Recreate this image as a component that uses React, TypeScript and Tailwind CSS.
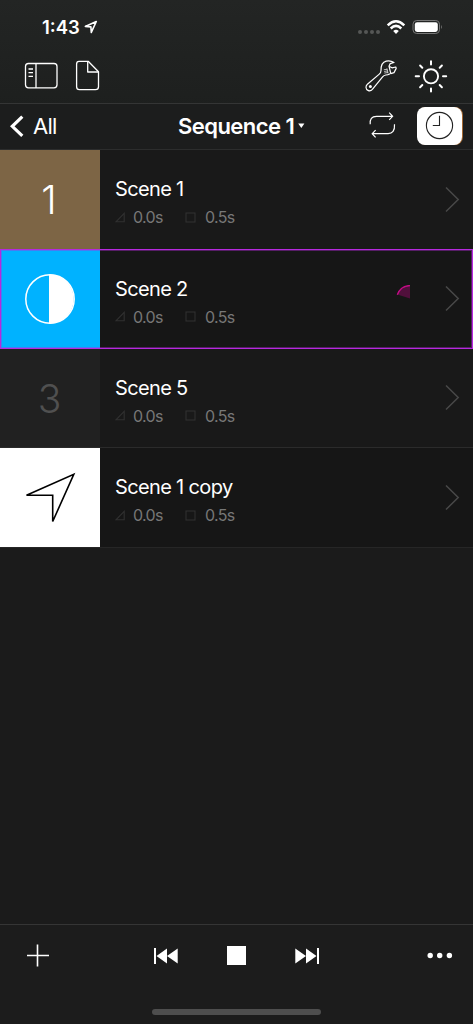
import type { ReactNode } from "react"

type Scene = {
    name: string
    thumb: ReactNode
    thumbClass: string
    rowClass: string
    active?: boolean
}

const HalfCircle = () => (
    <svg width="52" height="52" viewBox="24 273 52 52" fill="none">
        <circle cx="50" cy="299" r="24.2" stroke="white" strokeWidth="1.5" />
        <path d="M49 274.3A24.7 24.7 0 0 1 49 323.7Z" fill="white" />
    </svg>
)

const Arrow = () => (
    <svg width="52" height="52" viewBox="24 471.5 52 52" fill="none" stroke="black" strokeWidth="1.6">
        <path d="M26.5 494.8L73.8 473.8L52.7 521V494.8Z" />
    </svg>
)

const scenes: Scene[] = [
    {
        name: "Scene 1",
        thumb: <span className="pr-[2px] text-[39px] font-light text-white">1</span>,
        thumbClass: "bg-[#7d6545]",
        rowClass: "h-[99px] bg-[#191919]",
    },
    {
        name: "Scene 2",
        thumb: <HalfCircle />,
        thumbClass: "bg-[#00b2ff]",
        rowClass: "h-[100px] bg-[#161616]",
        active: true,
    },
    {
        name: "Scene 5",
        thumb: <span className="pr-[1px] text-[39px] font-light text-[#505050]">3</span>,
        thumbClass: "bg-[#212121]",
        rowClass: "h-[99px] bg-[#191919] border-b border-[#2b2b2b]",
    },
    {
        name: "Scene 1 copy",
        thumb: <Arrow />,
        thumbClass: "bg-white",
        rowClass: "h-[100px] bg-[#161616] border-b border-[#262626]",
    },
]

function StatusBar() {
    return (
        <div className="flex h-[54px] items-center justify-between pl-[42px] pr-[31px]">
            <div className="flex items-center gap-[4px]">
                <span className="w-[38px] whitespace-nowrap text-[18.5px] font-semibold leading-none">1:43</span>
                <svg width="14" height="14" viewBox="84 20 14 14" fill="none" stroke="white" strokeWidth="1.6" strokeLinejoin="round">
                    <path d="M85.3 26.4L96.3 21.5L91.3 32.4L90.9 26.9Z" />
                </svg>
            </div>
            <svg width="86" height="20" viewBox="356 17 86 20" fill="none">
                <g fill="#555756">
                    <circle cx="360" cy="32" r="2" />
                    <circle cx="366" cy="32" r="2" />
                    <circle cx="372" cy="32" r="2" />
                    <circle cx="378" cy="32" r="2" />
                </g>
                <g stroke="white" strokeWidth="2.5">
                    <path d="M387.7 25.3Q396 17.3 404.3 25.3" />
                    <path d="M390.7 28.5Q396 23.3 401.3 28.5" />
                </g>
                <path d="M393.2 31Q396 28.6 398.8 31L396 34Z" fill="white" />
                <rect x="413" y="20.5" width="26.5" height="13" rx="3.7" stroke="#777" />
                <rect x="414.8" y="22.2" width="23" height="9.7" rx="2.3" fill="white" />
                <path d="M441 25Q442.7 27 441 29Z" fill="#777" />
            </svg>
        </div>
    )
}

function Toolbar() {
    return (
        <div className="flex h-[50px] items-center justify-between border-b border-[#343535] pb-[5px] pl-6 pr-[25px]">
            <div className="flex items-center gap-[16px]">
                {/* Sidebar */}
                <svg width="35" height="32" viewBox="24 60 35 32" fill="none" stroke="white" strokeWidth="1.3">
                    <rect x="25.5" y="63.5" width="31.5" height="24.3" rx="3" />
                    <path d="M36 63.5V88M28.5 69H33M28.5 72.7H33M28.5 76.3H33" />
                </svg>
                {/* Document */}
                <svg width="25" height="32" viewBox="75 60 25 32" fill="none" stroke="white" strokeWidth="1.3" strokeLinejoin="round">
                    <path d="M79 61.3H88.2L98.5 71.8V86.8Q98.5 89.7 95.5 89.7H79.5Q76.6 89.7 76.6 86.8V64Q76.6 61.3 79 61.3Z" />
                    <path d="M87.7 61.5V72H98.3" />
                </svg>
            </div>
            <div className="flex items-center gap-4">
                {/* Wrench */}
                <svg width="34" height="34" viewBox="364 59 34 34" fill="none" stroke="white" strokeWidth="1.2" strokeLinecap="round" strokeLinejoin="round">
                    <path d="M389.6 73.9Q388 74.8 385.8 75Q383.8 75.4 382.6 76.9L373 88.7C371.6 90.8 369.6 91.2 368 90.4C365.5 89.2 365.4 86 367.4 84.3L379 74.4Q381 72.8 381 70.4C380.9 66.2 382.2 62.3 386.2 61.2C389 60.4 391.6 61 394 62.5L390.2 63.6L389 66.2L390.8 73.6L394 72.6L396.2 68.4L395.8 67L392 67.8L390 66.8" />
                    <path d="M384.2 69.7L386.8 69.3M384.5 71.4L387.2 71M384.7 73L387.5 72.6M387 68.8L388 73" strokeWidth="0.7" />
                    <circle cx="370.4" cy="86.4" r="1.5" fill="white" stroke="none" />
                </svg>
                {/* Brightness */}
                <svg width="34" height="34" viewBox="414 59 34 34" fill="none" stroke="white" strokeWidth="2" strokeLinecap="round">
                    <circle cx="431" cy="76.3" r="7.1" strokeWidth="1.9" />
                    <path d="M431 61.3V64.4M431 88.4V91.4M415.7 76.3H419M443 76.3H446.2M420.1 65.5L422.3 67.7M439.7 85L441.9 87.2M441.9 65.5L439.7 67.7M422.3 85L420.1 87.2" />
                </svg>
            </div>
        </div>
    )
}

function NavBar() {
    return (
        <div className="grid h-[46px] grid-cols-[178px_1fr_105px] items-center border-b border-[#2c2d2d] bg-[#1c1d1d] pb-[2px]">
            <button className="flex items-center gap-[9px] pl-[10px]">
                <svg width="14" height="22" viewBox="10 115 14 22" fill="none" stroke="white" strokeWidth="3.2">
                    <path d="M22.3 116.7L12.3 126.3L22.3 135.8" />
                </svg>
                <span className="text-[22px] leading-none tracking-[-0.8px]">All</span>
            </button>
            <div className="flex items-center gap-1">
                <span className="w-[116px] whitespace-nowrap text-[22px] font-semibold leading-none tracking-[-0.55px]">Sequence 1</span>
                <svg width="7" height="6" viewBox="0 0 7 6">
                    <path d="M0.2 0.5H6.4L3.3 5Z" fill="white" />
                </svg>
            </div>
            <div className="flex items-center gap-[21px]">
                <svg width="28" height="28" viewBox="367.5 112.5 28 28" fill="none" stroke="white" strokeWidth="1.2">
                    <path d="M369.7 124.8C369.2 119.4 371.2 116.8 376 116.8H391.6M388.7 113.2L392.1 116.8L388.7 120.4" />
                    <path d="M394 124.8C394.5 131.4 391.8 134.2 387.6 134.2H372M375.1 130.7L371.7 134.2L375.1 137.8" />
                </svg>
                <div className="flex h-[38px] w-[45px] items-center justify-center rounded-lg bg-white shadow-[1px_0_0_#a46831]">
                    <svg width="29" height="29" viewBox="0 0 29 29" fill="none" stroke="#222" strokeWidth="1.1">
                        <circle cx="14.5" cy="14.5" r="13.1" />
                        <path d="M14.5 4.8V14.5H7.8" />
                    </svg>
                </div>
            </div>
        </div>
    )
}

function SceneRow({ name, thumb, thumbClass, rowClass, active }: Scene) {
    return (
        <div className={`relative flex ${rowClass}`}>
            <div className={`flex w-[100px] shrink-0 items-center justify-center leading-none ${thumbClass}`}>{thumb}</div>
            <div className="flex flex-1 items-center justify-between pl-[15px] pr-[13px]">
                <div className="flex flex-col gap-[7px] pt-[6px]">
                    <span className="text-[20px] leading-[22px] tracking-[-0.65px]">{name}</span>
                    <div className="flex h-[20px] items-center text-[16px] leading-none tracking-[-0.7px] text-[#777]">
                        <svg width="11" height="11" viewBox="0 0 11 11" fill="none" stroke="#303030" strokeWidth="1.1">
                            <path d="M1 9.8H9.2V1.3Z" />
                        </svg>
                        <span className="ml-[7px] w-[52px]">0.0s</span>
                        <svg width="11" height="11" viewBox="0 0 11 11" fill="none" stroke="#303030" strokeWidth="1.1">
                            <rect x="1" y="1" width="9" height="9" />
                        </svg>
                        <span className="ml-[9px]">0.5s</span>
                    </div>
                </div>
                <div className="flex items-center gap-[34px]">
                    {active && (
                        <svg width="15" height="28" viewBox="396 285 15 28" fill="none">
                            <path d="M410 298.5V285.5Q400.5 285.8 397.2 294.5Z" fill="#50103b" />
                            <path d="M397.3 294.7Q400.5 285.8 410 285.5" stroke="#c30c85" strokeWidth="1.3" />
                        </svg>
                    )}
                    <svg width="15" height="26" viewBox="0 0.5 15 26" fill="none" stroke="#484848" strokeWidth="1.5">
                        <path d="M1 1L13.2 13L1 25" />
                    </svg>
                </div>
            </div>
            {active && <div className="absolute inset-0 border border-[#b629de] shadow-[inset_0_0_0_1px_#b629de66]" />}
        </div>
    )
}

function TransportBar() {
    return (
        <footer className="flex h-[100px] flex-col items-center justify-between border-t border-[#353535] bg-[#1c1c1c] pb-[9px]">
            <div className="flex h-[61px] w-full items-center justify-between pl-[26px] pr-[20px]">
                <svg width="24" height="24" viewBox="0 0 24 24" stroke="white" strokeWidth="1.6">
                    <path d="M1 11.5H23M11.5 0.5V22.5" />
                </svg>
                <div className="flex items-center gap-[49px] pr-[4px]">
                    <svg width="24" height="16" viewBox="0 0 24 16" fill="white">
                        <path d="M0 0H2V16H0ZM2.5 8L13 0.5V8L23.7 0.5V15.5L13 8V15.5Z" />
                    </svg>
                    <div className="h-[19px] w-[19px] bg-white" />
                    <svg width="24" height="16" viewBox="0 0 24 16" fill="white">
                        <path d="M22 0H24V16H22ZM21.5 8L11 0.5V8L0.3 0.5V15.5L11 8V15.5Z" />
                    </svg>
                </div>
                <svg width="26" height="8" viewBox="0 0 26 8" fill="white">
                    <circle cx="3.2" cy="3.5" r="2.7" />
                    <circle cx="12.7" cy="3.5" r="2.7" />
                    <circle cx="22.4" cy="3.5" r="2.7" />
                </svg>
            </div>
            <div className="mr-[1px] h-[6px] w-[169px] rounded-full bg-[#4e4e4e]" />
        </footer>
    )
}

export default function App() {
    return (
        <div className="flex h-[1024px] w-[473px] flex-col overflow-hidden bg-[#1b1b1b] font-['Inter',sans-serif] text-white">
            <header className="bg-gradient-to-b from-[#232524] to-[#1b1d1c]">
                <StatusBar />
                <Toolbar />
                <NavBar />
            </header>
            <main className="flex-1">
                {scenes.map((scene) => (
                    <SceneRow key={scene.name} {...scene} />
                ))}
            </main>
            <TransportBar />
        </div>
    )
}
